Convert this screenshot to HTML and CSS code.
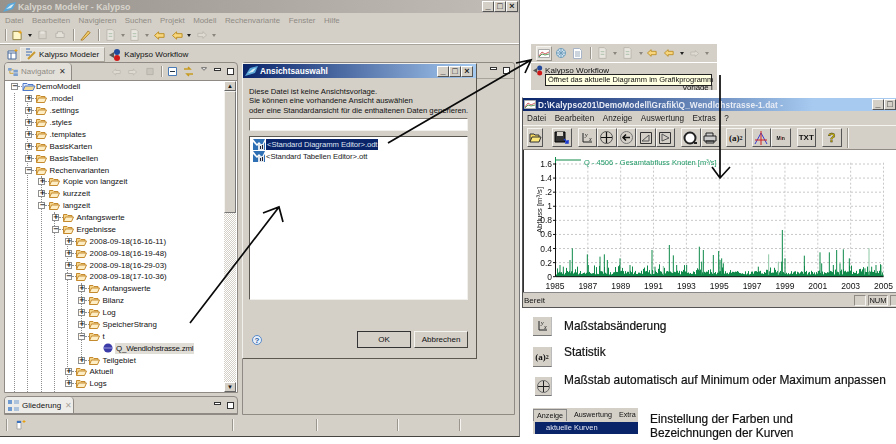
FILE: index.html
```html
<!DOCTYPE html>
<html lang="de">
<head>
<meta charset="utf-8">
<title>Kalypso</title>
<link rel="stylesheet" href="styles.css">
</head>
<body>
<svg class="defs" width="0" height="0">
  <defs>
    <symbol id="folder" viewBox="0 0 11 9"><path d="M.5 8.500V1.500H4l1 1h4v1.500" fill="#f6d58c" stroke="#c58a2e"/><path d="M.5 8.500 2.500 4h8l-2 4.500z" fill="#fdeec6" stroke="#c58a2e"/></symbol>
    <symbol id="folderb" viewBox="0 0 14 9"><path d="M1 8.500V1.500H5l1 1h5v1.500" fill="#dfe9fb" stroke="#4f79c9"/><path d="M1 8.500 3 4h10l-2 4.500z" fill="#f3da94" stroke="#4f79c9"/></symbol>
    <symbol id="chartdoc" viewBox="0 0 12 11"><rect width="12" height="11" fill="#2f6fb3"/><path d="M0 0 4 5l2-2 3 3 3-6v3L9 8 6 5 4 7 0 3z" fill="#fff"/><rect x="5" y="5" width="6" height="6" fill="#dfe6ee"/><path d="M7 10V7h1v3zm2 0V6h1v4z" fill="#223"/></symbol>
    <symbol id="backarrow" viewBox="0 0 12 9"><path d="M.5 4.500 5 .5v2h6v4H5v2z" fill="#f7d67e" stroke="#b98a1e"/></symbol>
    <symbol id="fwdarrow" viewBox="0 0 12 9"><path d="M11.500 4.500 7 .5v2H1v4h6v2z" fill="#dedad2" stroke="#b9b5ad"/></symbol>
    <symbol id="pagearrow" viewBox="0 0 10 13"><path d="M1 .5h6l2 2v10H1z" fill="#e8e5df" stroke="#b9b5ad"/><path d="M3 5h4M3 8h4" stroke="#a8c0a8"/></symbol>
  </defs>
</svg>

<section class="win main-win">
  <header class="main-title">
    <svg width="13" height="10" viewBox="0 0 13 10"><path d="M0 10 5 2l8-2-3 7z" fill="#5aa7d8"/><path d="M3 7 8 3l3-1-3 4z" fill="#d8ecf6"/></svg>
    <span>Kalypso Modeler - Kalypso</span>
    <div class="capbtns main-caps"><i>_</i><i>□</i><i>×</i></div>
  </header>
  <nav class="main-menu">
    <span>Datei</span><span>Bearbeiten</span><span>Navigieren</span><span>Suchen</span><span>Projekt</span><span>Modell</span><span>Rechenvariante</span><span>Fenster</span><span>Hilfe</span>
  </nav>
  <div class="main-tools">
    <b class="grip"></b>
    <svg class="m5" width="11" height="11" viewBox="0 0 12 11"><path d="M1 1h7l2 2v7H1z" fill="#fff6c8" stroke="#8a7a3a"/><path d="M9 0v4M7 2h4" stroke="#e8a010"/></svg>
    <em class="drop m5"></em>
    <svg class="m6" width="9" height="10" viewBox="0 0 11 11"><path d="M1 1h9v9H1z" fill="#d6d2ca" stroke="#b5b1a9"/><path d="M3 1h5v3H3z" fill="#e8e5df"/></svg>
    <svg class="m8" width="10" height="10" viewBox="0 0 12 10"><path d="M3 3V1h6v2h2v5H1V3z" fill="#e3e0d8" stroke="#b5b1a9"/></svg>
    <b class="grip m8"></b>
    <svg class="m5" width="11" height="11" viewBox="0 0 12 12"><path d="M1 11 9 1l2 2-8 8z" fill="#f4cf6e" stroke="#a87a22"/></svg>
    <b class="grip m7"></b>
    <svg class="m6" width="9" height="12"><use href="#pagearrow"/></svg><em class="drop pale m6"></em>
    <svg class="m5" width="9" height="12"><use href="#pagearrow"/></svg><em class="drop pale m6"></em>
    <svg class="m5" width="11" height="9"><use href="#backarrow"/></svg>
    <svg class="m7" width="11" height="9"><use href="#backarrow"/></svg><em class="drop m4"></em>
    <svg class="m6" width="10" height="8"><use href="#fwdarrow"/></svg><em class="drop pale m5"></em>
  </div>
  <div class="persp">
    <svg class="persp-new" width="11" height="11" viewBox="0 0 11 11"><path d="M1 2h8v8H1z" fill="#fff" stroke="#4a6a9a"/><path d="M1 4h8M4 4v6" stroke="#4a6a9a"/><path d="M9 0v3M7.500 1.500h3" stroke="#e8a010"/></svg>
    <div class="persp-tab active">
      <svg width="11" height="12" viewBox="0 0 11 12"><path d="M1 1h4M1 4h6M1 7h4" stroke="#3a6ab0"/><path d="M3 11 10 4" stroke="#c89a30" stroke-width="2"/></svg>
      <span>Kalypso Modeler</span>
    </div>
    <div class="persp-tab">
      <svg width="12" height="13" viewBox="0 0 12 13"><circle cx="8" cy="4" r="3" fill="#234a9a"/><circle cx="8" cy="10" r="3" fill="#d01818"/><path d="M0 7 5 4v6z" fill="#555"/></svg>
      <span>Kalypso Workflow</span>
    </div>
  </div>

  <div class="workbench">
    <div class="left-col">
      <section class="view navigator">
        <div class="view-head">
          <div class="view-tab">
            <svg width="10" height="8" viewBox="0 0 11 9"><path d="M0 0h4v3H0zM6 2h5v3H6zM6 6h5v3H6z" fill="#7ba0cf"/><path d="M2 3v3h4M4 2h2" stroke="#c9a030" fill="none"/></svg>
            <span class="dim">Navigator</span><span class="tab-x">✕</span>
          </div>
          <div class="view-tools">
            <svg width="9" height="8" viewBox="0 0 12 9"><path d="M.5 4.500 5 .5v2h6v4H5v2z" fill="#dedad2" stroke="#b9b5ad"/></svg>
            <svg class="m7" width="9" height="8"><use href="#fwdarrow"/></svg>
            <svg class="m9" width="8" height="9" viewBox="0 0 9 9"><path d="M1 1h7v7H1z" fill="#c9c5bd" stroke="#b5b1a9"/></svg>
            <b class="grip short m7"></b>
            <svg class="m5" width="9" height="9" viewBox="0 0 9 9"><path d="M.5.500h8v8h-8z" fill="#fff" stroke="#4a7ab5"/><path d="M2 4.500h5" stroke="#234"/></svg>
            <svg class="m6" width="11" height="11" viewBox="0 0 11 11"><path d="M1 3h6L5 1M10 8H4l2 2" fill="none" stroke="#c89a20" stroke-width="1.500"/></svg>
            <svg class="m7 up" width="6" height="4" viewBox="0 0 7 4"><path d="M.5.500h6L3.500 3.500z" fill="#fff" stroke="#555"/></svg>
            <span class="mini min m7"></span><span class="mini max m6"></span>
          </div>
        </div>
        <div class="tree-wrap">
          <div class="tree">
            <i class="guide g1"></i><i class="guide g2"></i><i class="guide g3"></i><i class="guide g4"></i><i class="guide g5"></i><i class="guide g6"></i>
            <div class="row l0"><b class="x">−</b><svg width="14" height="9"><use href="#folderb"/></svg><span>DemoModell</span></div>
            <div class="row l1"><b class="x">+</b><svg width="11" height="9"><use href="#folder"/></svg><span>.model</span></div>
            <div class="row l1"><b class="x">+</b><svg width="11" height="9"><use href="#folder"/></svg><span>.settings</span></div>
            <div class="row l1"><b class="x">+</b><svg width="11" height="9"><use href="#folder"/></svg><span>.styles</span></div>
            <div class="row l1"><b class="x">+</b><svg width="11" height="9"><use href="#folder"/></svg><span>.templates</span></div>
            <div class="row l1"><b class="x">+</b><svg width="11" height="9"><use href="#folder"/></svg><span>BasisKarten</span></div>
            <div class="row l1"><b class="x">+</b><svg width="11" height="9"><use href="#folder"/></svg><span>BasisTabellen</span></div>
            <div class="row l1"><b class="x">−</b><svg width="11" height="9"><use href="#folder"/></svg><span>Rechenvarianten</span></div>
            <div class="row l2"><b class="x">+</b><svg width="11" height="9"><use href="#folder"/></svg><span>Kopie von langzeit</span></div>
            <div class="row l2"><b class="x">+</b><svg width="11" height="9"><use href="#folder"/></svg><span>kurzzeit</span></div>
            <div class="row l2"><b class="x">−</b><svg width="11" height="9"><use href="#folder"/></svg><span>langzeit</span></div>
            <div class="row l3"><b class="x">+</b><svg width="11" height="9"><use href="#folder"/></svg><span>Anfangswerte</span></div>
            <div class="row l3"><b class="x">−</b><svg width="11" height="9"><use href="#folder"/></svg><span>Ergebnisse</span></div>
            <div class="row l4"><b class="x">+</b><svg width="11" height="9"><use href="#folder"/></svg><span>2008-09-18(16-16-11)</span></div>
            <div class="row l4"><b class="x">+</b><svg width="11" height="9"><use href="#folder"/></svg><span>2008-09-18(16-19-48)</span></div>
            <div class="row l4"><b class="x">+</b><svg width="11" height="9"><use href="#folder"/></svg><span>2008-09-18(16-29-03)</span></div>
            <div class="row l4"><b class="x">−</b><svg width="11" height="9"><use href="#folder"/></svg><span>2008-09-18(17-10-36)</span></div>
            <div class="row l5"><b class="x">+</b><svg width="11" height="9"><use href="#folder"/></svg><span>Anfangswerte</span></div>
            <div class="row l5"><b class="x">+</b><svg width="11" height="9"><use href="#folder"/></svg><span>Bilanz</span></div>
            <div class="row l5"><b class="x">+</b><svg width="11" height="9"><use href="#folder"/></svg><span>Log</span></div>
            <div class="row l5"><b class="x">+</b><svg width="11" height="9"><use href="#folder"/></svg><span>SpeicherStrang</span></div>
            <div class="row l5"><b class="x">−</b><svg width="11" height="9"><use href="#folder"/></svg><span>t</span></div>
            <div class="row l6"><svg width="10" height="10" viewBox="0 0 10 10"><circle cx="5" cy="5" r="4.500" fill="#3c3ca8"/><path d="M0 5h10" stroke="#9a9ae0"/></svg><span class="sel-file">Q_Wendlohstrasse.zml</span></div>
            <div class="row l5"><b class="x">+</b><svg width="11" height="9"><use href="#folder"/></svg><span>Teilgebiet</span></div>
            <div class="row l4"><b class="x">+</b><svg width="11" height="9"><use href="#folder"/></svg><span>Aktuell</span></div>
            <div class="row l4"><b class="x">+</b><svg width="11" height="9"><use href="#folder"/></svg><span>Logs</span></div>
          </div>
          <div class="scroll">
            <span class="sbtn">▲</span><span class="thumb"></span><span class="track"></span><span class="sbtn">▼</span>
          </div>
        </div>
      </section>
      <section class="view outline">
        <div class="view-head low">
          <div class="view-tab out">
            <svg width="11" height="11" viewBox="0 0 11 11"><path d="M0 0h4v4H0zM0 7h4v4H0z" fill="#6f9bd0"/><path d="M6 1h5M6 3h5M6 8h5M6 10h5" stroke="#6f9bd0"/></svg>
            <span>Gliederung</span><span class="tab-x pale">✕</span>
          </div>
          <div class="view-tools"><span class="mini min"></span><span class="mini max m6"></span></div>
        </div>
      </section>
    </div>
    <div class="right-col">
      <div class="editor-head"><span class="mini min"></span><span class="mini max m6"></span></div>
    </div>
  </div>
  <footer class="main-status">
    <b class="grip fast"></b>
    <svg class="new-ico" width="10" height="10" viewBox="0 0 10 10"><path d="M1 1h4v8H1z" fill="#fff" stroke="#aaa"/><path d="M1 1h4v2H1z" fill="#3a70c0"/><path d="M8 0v3M6.500 1.500h3" stroke="#e8a010"/></svg>
    <b class="grip s1"></b><b class="grip s2"></b><b class="grip s3"></b><b class="grip s4"></b>
  </footer>
</section>

<section class="win dialog">
  <header class="dlg-title">
    <svg width="13" height="10" viewBox="0 0 13 10"><path d="M0 10 5 2l8-2-3 7z" fill="#5aa7d8"/><path d="M3 7 8 3l3-1-3 4z" fill="#d8ecf6"/></svg>
    <span>Ansichtsauswahl</span>
    <div class="capbtns"><i>_</i><i>□</i><i>×</i></div>
  </header>
  <div class="dlg-body">
    <p class="dlg-text">Diese Datei ist keine Ansichtsvorlage.<br>Sie können eine vorhandene Ansicht auswählen<br>oder eine Standardansicht für die enthaltenen Daten generieren.</p>
    <div class="dlg-input"></div>
    <div class="dlg-list">
      <div class="li"><svg width="12" height="11"><use href="#chartdoc"/></svg><span class="sel">&lt;Standard Diagramm Editor&gt;.odt</span></div>
      <div class="li"><svg width="12" height="11"><use href="#chartdoc"/></svg><span>&lt;Standard Tabellen Editor&gt;.ott</span></div>
    </div>
    <div class="dlg-foot">
      <svg width="10" height="10" viewBox="0 0 10 10"><circle cx="5" cy="5" r="4.500" fill="#e8f0fa" stroke="#5a8ac8"/><text x="5" y="8" class="help">?</text></svg>
      <button class="btn default">OK</button><button class="btn">Abbrechen</button>
    </div>
  </div>
</section>

<section class="snippet">
  <div class="snip-tools">
    <span class="snip-on"><svg width="12" height="9" viewBox="0 0 12 9"><path d="M.5.500h11v8H.5z" fill="#fff" stroke="#aaa"/><path d="M1 7 4 3l3 2 4-2" fill="none" stroke="#d06060"/><path d="M1 8 4 5l3 1 4-1" fill="none" stroke="#60a060"/></svg></span>
    <svg class="m4" width="10" height="10" viewBox="0 0 11 11"><circle cx="5.500" cy="5.500" r="5" fill="#cfe0ee" stroke="#6a9ab8"/><path d="M1 5.500h9M5.500 1v9M2.500 2.500l6 6M8.500 2.500l-6 6" stroke="#6a9ab8"/></svg>
    <svg class="m7" width="9" height="11" viewBox="0 0 9 11"><path d="M.5.500h6l2 2v8H.5z" fill="#fff" stroke="#a8b4c8"/><path d="M2 4h5M2 6h5M2 8h5" stroke="#9ab"/></svg>
    <b class="grip m8"></b>
    <svg class="m6" width="9" height="12"><use href="#pagearrow"/></svg><em class="drop pale m6"></em>
    <svg class="m6" width="9" height="12"><use href="#pagearrow"/></svg><em class="drop pale m7"></em>
    <svg class="m4" width="10" height="8"><use href="#backarrow"/></svg>
    <svg class="m7" width="10" height="8"><use href="#backarrow"/></svg><em class="drop m6"></em>
    <svg class="m6" width="9" height="7"><use href="#fwdarrow"/></svg><em class="drop pale m6"></em>
  </div>
  <div class="snip-flow">
    <svg width="10" height="12" viewBox="0 0 12 13"><circle cx="8" cy="4" r="3" fill="#234a9a"/><circle cx="8" cy="10" r="3" fill="#d01818"/><path d="M0 7 5 4v6z" fill="#555"/></svg>
    <span>Kalypso Workflow</span>
  </div>
  <div class="snip-low"><span>Vorlage I</span></div>
  <div class="tooltip">Öffnet das aktuelle Diagramm im Grafikprogramm</div>
</section>

<section class="win chart-win">
  <header class="chart-title">
    <svg width="12" height="9" viewBox="0 0 12 9"><path d="M.5.500h11v8H.5z" fill="#fff" stroke="#aaa"/><path d="M1 7 4 3l3 2 4-2" fill="none" stroke="#d06060"/><path d="M1 8 4 5l3 1 4-1" fill="none" stroke="#60a060"/></svg>
    <span>D:\Kalypso201\DemoModell\Grafik\Q_Wendlohstrasse-1.dat -</span>
    <div class="capbtns"><i>_</i><i>□</i></div>
  </header>
  <nav class="chart-menu"><span>Datei</span><span>Bearbeiten</span><span>Anzeige</span><span>Auswertung</span><span>Extras</span><span>?</span></nav>
  <div class="chart-tools">
    <span class="tb first"><svg width="13" height="11" viewBox="0 0 13 11"><path d="M1 10V2h4l1 1h4v2" fill="#f4d860" stroke="#333"/><path d="M1 10 3 5h9l-2 5z" fill="#ffe97a" stroke="#333"/></svg></span>
    <span class="tb g1"><svg width="15" height="14" viewBox="0 0 15 14"><path d="M1 1h10v10H1z" fill="#333" stroke="#000"/><path d="M3 1h6v4H3z" fill="#d8d4cc"/><path d="M10 8l4 4M14 9v3h-3" stroke="#1a3ad0" stroke-width="1.500" fill="none"/></svg></span>
    <span class="tb g2"><svg width="12" height="12" viewBox="0 0 12 12"><path d="M2 1v9h9" fill="none" stroke="#222"/><text x="4" y="5" class="tiny">y</text><text x="8" y="9" class="tiny">x</text></svg></span>
    <span class="tb"><svg width="13" height="13" viewBox="0 0 13 13"><circle cx="6.500" cy="6.500" r="6" fill="none" stroke="#555"/><path d="M6.500 1v11M1 6.500h11" stroke="#111" stroke-width="1.200"/></svg></span>
    <span class="tb"><svg width="13" height="13" viewBox="0 0 13 13"><circle cx="6.500" cy="6.500" r="6" fill="none" stroke="#777"/><path d="M10 6.500H3M6 3.500l-3 3 3 3" fill="none" stroke="#111" stroke-width="1.500"/></svg></span>
    <span class="tb"><svg width="12" height="12" viewBox="0 0 12 12"><path d="M.5.500h11v11H.5z" fill="none" stroke="#333"/><path d="M2 9 9 3v6z" fill="none" stroke="#555"/></svg></span>
    <span class="tb"><svg width="12" height="12" viewBox="0 0 12 12"><path d="M.5.500h11v11H.5z" fill="none" stroke="#333"/><path d="M3 2 10 6 3 9z" fill="none" stroke="#555"/></svg></span>
    <span class="tb g2"><svg width="15" height="14" viewBox="0 0 15 14"><circle cx="7" cy="7" r="5.500" fill="#fff" stroke="#222" stroke-width="2"/><path d="M11 12h3" stroke="#222" stroke-width="2"/></svg></span>
    <span class="tb"><svg width="14" height="12" viewBox="0 0 14 12"><path d="M3 4V1h7v3M1 4h12v5H1zM3 9h8v2H3z" fill="#ccc" stroke="#222"/></svg></span>
    <span class="tb g2 sym">(a)<sup>2</sup></span>
    <span class="tb g2"><svg width="14" height="14" viewBox="0 0 14 14"><path d="M1 13 7 2l6 11" fill="none" stroke="#3a3ad0"/><path d="M7 0v14M1 9h12" stroke="#d02020"/></svg></span>
    <span class="tb sym small">M<i>i</i>n</span>
    <span class="tb g2 sym txt">TXT</span>
    <span class="tb g2 sym q">?</span>
    <b class="grip tall"></b>
  </div>
  <div class="chart-area">
    <svg id="chart" class="chart-svg" width="372" height="141" viewBox="0 0 372 141"></svg>
  </div>
  <footer class="chart-status">
    <span>Bereit</span>
    <div class="cells"><i></i><i>NUM</i><i></i></div>
  </footer>
</section>

<section class="legend">
  <div class="lg-row r1"><span class="key"><svg width="12" height="12" viewBox="0 0 12 12"><path d="M3 1v9h8" fill="none" stroke="#222"/><text x="5" y="5" class="tiny">y</text><text x="8" y="9" class="tiny">x</text></svg></span><span class="lg-text">Maßstabsänderung</span></div>
  <div class="lg-row r2"><span class="key sym">(a)<sup>2</sup></span><span class="lg-text">Statistik</span></div>
  <div class="lg-row r3"><span class="key"><svg width="13" height="13" viewBox="0 0 13 13"><circle cx="6.500" cy="6.500" r="6" fill="none" stroke="#666"/><path d="M6.500 1v11M1 6.500h11" stroke="#222"/></svg></span><span class="lg-text">Maßstab automatisch auf Minimum oder Maximum anpassen</span></div>
  <div class="lg-last">
    <div class="mini-menu">
      <div class="mm-bar"><span class="on">Anzeige</span><span>Auswertung</span><span>Extra</span></div>
      <div class="mm-item">aktuelle Kurven</div>
    </div>
    <div class="lg-text two">Einstellung der Farben und<br>Bezeichnungen der Kurven</div>
  </div>
</section>

<svg class="arrows" width="896" height="444" viewBox="0 0 896 444">
  <path d="M190 323 279 207M263 213 279 207 283 222" />
  <path d="M388 143 531 60M516 63 531 60 525 73" />
  <path d="M720 75V178M712 167 720 178 730 167" />
</svg>
<script src="chart.js"></script>
</body>
</html>
```

FILE: styles.css
```css
* { box-sizing: border-box; }
html, body { margin: 0; padding: 0; }
body {
  width: 896px; height: 444px; overflow: hidden; position: relative;
  background: #fff; color: #111;
  font-family: "Liberation Sans", Arial, sans-serif; font-size: 8px;
  filter: blur(.3px);
}
.defs { position: absolute; }
svg { display: block; flex: none; }
em, i, b { font-style: normal; font-weight: normal; }
.m4 { margin-left: 4px; } .m5 { margin-left: 5px; } .m6 { margin-left: 6px; } .m7 { margin-left: 7px; } .m8 { margin-left: 8px; } .m9 { margin-left: 9px; }
.win { position: absolute; background: #d4d0c8; }

.main-win { left: 0; top: 0; width: 520px; height: 437px; display: flex; flex-direction: column; border-bottom: 1px solid #45443f; border-right: 1px solid #777; }
.main-title { flex: none; height: 13px; display: flex; align-items: center; gap: 2px; padding: 0 1px 0 3px; background: linear-gradient(90deg, #97938c, #c2beb7); color: #d8d4cc; font-size: 8.800px; font-weight: bold; }
.capbtns { margin-left: auto; display: flex; }
.capbtns i { width: 12px; height: 11px; background: #d4d0c8; color: #222; border: 1px solid; border-color: #fff #555 #555 #fff; font-size: 9px; line-height: 8px; text-align: center; font-weight: bold; }
.main-menu { flex: none; height: 14px; display: flex; align-items: center; padding: 0 0 0 5px; gap: 8.500px; color: #8f8b84; font-size: 7.900px; }
.main-tools { flex: none; height: 17px; display: flex; align-items: center; padding-left: 5px; border-bottom: 1px solid #fff; box-shadow: 0 1px 0 #a8a49c; }
.grip { display: block; flex: none; width: 2px; height: 12px; background: #f6f4f0; border-left: 1px solid #9a968e; }
.grip.short { height: 11px; }
.drop { flex: none; width: 0; height: 0; border: 2.500px solid transparent; border-top: 3px solid #222; border-bottom: 0; }
.drop.pale { border-top-color: #8a867e; }

.persp { flex: none; height: 18px; display: flex; align-items: center; padding: 2px 0 0 7px; }
.persp-new { margin-right: 2px; }
.persp-tab { height: 15px; display: flex; align-items: center; gap: 3px; padding: 0 5px 0 4px; font-size: 8.100px; white-space: nowrap; }
.persp-tab.active { background: #e4e1db; border: 1px solid #f2f0ec; border-right-color: #aaa69e; border-bottom-color: #aaa69e; }

.workbench { flex: none; height: 353px; display: flex; padding: 0 4px 0 4px; }
.left-col { flex: none; width: 234px; display: flex; flex-direction: column; gap: 3px; }
.right-col { flex: 1; margin-left: 4px; border: 1px solid #8f8b84; border-radius: 3px 3px 0 0; }
.editor-head { height: 16px; display: flex; align-items: center; justify-content: flex-end; padding-right: 4px; border-bottom: 1px solid #a8a49c; }
.view { border: 1px solid #8f8b84; border-radius: 4px 4px 0 0; display: flex; flex-direction: column; }
.navigator { flex: none; height: 331px; }
.outline { flex: none; height: 19px; }
.view-head { flex: none; height: 18px; display: flex; align-items: stretch; justify-content: space-between; border-bottom: 1px solid #8f8b84; }
.view-head.low { height: 17px; }
.view-tab { width: 67px; display: flex; align-items: center; gap: 3px; padding-left: 3px; background: #e3e0da; border-right: 1px solid #8f8b84; border-radius: 3px 4px 0 0; white-space: nowrap; }
.view-tab.out { width: 69px; background: #eeece8; font-size: 8px; }
.dim { color: #8f8b84; font-size: 8px; }
.tab-x { margin-left: 1px; font-size: 7.500px; color: #333; }
.tab-x.pale { color: #a8a49c; }
.view-tools { display: flex; align-items: center; padding-right: 3px; }
.up { margin-top: -6px; }
.mini { display: block; flex: none; width: 7px; height: 7px; background: #fff; border: 1px solid #333; }
.mini.min { height: 3px; margin-bottom: 4px; }

.tree-wrap { flex: 1; display: flex; background: #fff; min-height: 0; padding-right: 1px; }
.tree { position: relative; flex: 1; }
.guide { position: absolute; width: 0; border-left: 1px dotted #8f8f8f; bottom: 0; }
.guide.g1 { left: 9px; top: 12px; }
.guide.g2 { left: 22px; top: 18px; }
.guide.g3 { left: 36px; top: 95px; }
.guide.g4 { left: 49px; top: 131px; }
.guide.g5 { left: 62px; top: 155px; bottom: 7px; }
.guide.g6 { left: 76px; top: 202px; bottom: 31px; }
.row { position: relative; height: 11.880px; display: flex; align-items: center; font-size: 7.900px; white-space: nowrap; }
.row svg { margin-right: 2.500px; }
.x { position: relative; flex: none; width: 7px; height: 7px; margin-right: 4px; border: 1px solid #8f8f8f; background: #fff; color: #000; font: bold 7px/4px "DejaVu Sans", sans-serif; text-align: center; }
.x::after { content: ""; position: absolute; left: 6px; top: 2px; width: 4px; border-top: 1px dotted #8f8f8f; }
.l0 { padding-left: 6px; } .l1 { padding-left: 20px; } .l2 { padding-left: 33.400px; } .l3 { padding-left: 47px; } .l4 { padding-left: 60px; } .l5 { padding-left: 73px; } .l6 { padding-left: 98px; }
.l0 svg { margin-right: 0; }
.sel-file { background: #e1ded8; padding: 0 1px; line-height: 11px; letter-spacing: -.2px; }
.row.l6 svg { margin-right: 2px; }
.scroll { flex: none; width: 12px; display: flex; flex-direction: column; }
.sbtn { flex: none; height: 10px; background: #d4d0c8; border: 1px solid; border-color: #fff #666 #666 #fff; font-size: 6px; line-height: 8px; text-align: center; color: #111; }
.thumb { flex: none; height: 122px; background: #d4d0c8; border: 1px solid; border-color: #f6f4f0 #777 #777 #f6f4f0; }
.track { flex: 1; background: repeating-conic-gradient(#fff 0 25%, #d4d0c8 0 50%) 0 0 / 2px 2px; }

.main-status { flex: 1; position: relative; }
.grip.fast, .grip.s1, .grip.s2, .grip.s3, .grip.s4 { position: absolute; top: 4px; }
.grip.fast { left: 6px; }
.new-ico { position: absolute; left: 16px; top: 5px; }
.grip.s1 { left: 232px; } .grip.s2 { left: 316px; } .grip.s3 { left: 397px; } .grip.s4 { left: 459px; }

.dialog { left: 242px; top: 63px; width: 235px; height: 296px; border: 1px solid; border-color: #f2f0ec #5a5850 #5a5850 #f2f0ec; display: flex; flex-direction: column; }
.dlg-title { flex: none; height: 14px; display: flex; align-items: center; gap: 2px; padding: 0 3px 0 2px; background: linear-gradient(90deg, #0a246a, #a6caf0); color: #fff; font-size: 8.300px; font-weight: bold; }
.dlg-body { flex: 1; display: flex; flex-direction: column; padding: 9px 8px 10px 6px; min-height: 0; }
.dlg-text { margin: 0; font-size: 7.700px; line-height: 9.300px; white-space: nowrap; }
.dlg-input { flex: none; height: 13px; margin-top: 3px; background: #fff; border: 1px solid; border-color: #7a766e #f2f0ec #f2f0ec #7a766e; }
.dlg-list { flex: 1; margin-top: 5px; background: #fff; border: 1px solid; border-color: #5a5850 #f2f0ec #f2f0ec #5a5850; padding: 2px 3px; }
.li { display: flex; align-items: center; height: 11.500px; gap: 1px; font-size: 7.700px; letter-spacing: -.08px; white-space: nowrap; color: #222; }
.li .sel { background: #0a246a; color: #dfe3ee; padding: 1px; }
.dlg-foot { flex: none; display: flex; align-items: center; height: 17px; margin-top: 31px; padding-left: 3px; }
.btn { width: 54px; height: 17px; margin: 0; padding: 0; font: 8px "Liberation Sans", Arial, sans-serif; color: #111; background: #d4d0c8; border: 1px solid; border-color: #f6f4f0 #45443f #45443f #f6f4f0; }
.btn.default { margin-left: auto; margin-right: 3px; outline: 1px solid #333; outline-offset: -1px; }

.help { font: bold 8px "Liberation Sans", sans-serif; text-anchor: middle; fill: #2a5aa0; }
.tiny { font: italic 6px "Liberation Serif", serif; fill: #111; }

.snippet { position: absolute; left: 531px; top: 44px; width: 186px; height: 46px; background: #d4d0c8; overflow: hidden; }
.snip-tools { height: 19px; display: flex; align-items: center; padding-left: 5px; border-bottom: 1px solid #fff; }
.snip-on { flex: none; width: 16px; height: 15px; display: flex; align-items: center; justify-content: center; background: #e6e3dd; border: 1px solid; border-color: #f6f4f0 #9a968e #9a968e #f6f4f0; }
.snip-flow { display: flex; align-items: center; gap: 2px; padding-left: 2px; height: 10px; margin-top: 2px; font-size: 8.100px; white-space: nowrap; }
.snip-low { display: flex; justify-content: flex-end; padding-right: 4px; margin-top: 10px; font-size: 7.800px; height: 5px; line-height: 6px; overflow: hidden; }
.tooltip { position: absolute; left: 14px; top: 30px; height: 12px; width: 167px; background: #ffffe1; border: 1px solid #222; font-size: 7.500px; line-height: 10px; padding-left: 2px; white-space: nowrap; color: #111; }

.chart-win { left: 522px; top: 97px; width: 374px; height: 211px; display: flex; flex-direction: column; border-left: 1px solid #555; border-bottom: 1px solid #555; border-top: 1px solid #fff; }
.chart-title { flex: none; height: 13px; display: flex; align-items: center; gap: 2px; padding-left: 1px; background: linear-gradient(90deg, #0a246a 0, #a6caf0 290px); color: #e8ecf4; font-size: 8.300px; font-weight: bold; letter-spacing: .1px; white-space: nowrap; }
.chart-menu { flex: none; height: 14px; display: flex; align-items: center; gap: 8.500px; padding-left: 4px; font-size: 8.200px; color: #222; }
.chart-tools { flex: none; height: 25px; display: flex; align-items: center; padding-left: 4px; border-top: 1px solid #f6f4f0; border-bottom: 1px solid #8f8b84; }
.tb { flex: none; width: 19.500px; height: 19px; display: flex; align-items: center; justify-content: center; background: #d4d0c8; border: 1px solid; border-color: #f6f4f0 #555 #555 #f6f4f0; }
.tb.first { width: 16px; }
.tb.g1 { margin-left: 9px; } .tb.g2 { margin-left: 6px; }
.sym { font: bold 9px "Liberation Serif", serif; color: #111; }
.sym sup { font-size: 6px; line-height: 0; vertical-align: 3px; }
.sym.small { font: bold 5px "Liberation Sans", sans-serif; }
.sym.small i { color: #c01010; }
.sym.txt { font: bold 8px "Liberation Sans", sans-serif; }
.sym.q { font: bold 13px "Liberation Sans", sans-serif; color: #c8b000; -webkit-text-stroke: .3px #222; }
.grip.tall { height: 20px; margin-left: 5px; }
.chart-area { flex: none; height: 142px; background: #fff; border-left: 1px solid #333; }
.chart-svg text { font-family: "Liberation Sans", Arial, sans-serif; font-size: 8.500px; fill: #111; }
.chart-svg .lbl { font-size: 7.500px; fill: #1f9a66; }
.chart-svg .ylab { font-size: 7.600px; }
.chart-status { flex: 1; display: flex; align-items: center; justify-content: space-between; padding-left: 1px; font-size: 8px; border-top: 1px solid #888; overflow: hidden; }
.cells { display: flex; gap: 2px; margin-right: -6px; }
.cells i { width: 12px; height: 11px; border: 1px solid; border-color: #8f8b84 #f6f4f0 #f6f4f0 #8f8b84; font-size: 7.500px; line-height: 9px; text-align: center; }
.cells i:nth-child(2) { width: 20px; }

.legend { position: absolute; left: 0; top: 0; width: 896px; height: 444px; pointer-events: none; }
.lg-row { position: absolute; left: 533px; display: flex; align-items: flex-start; }
.r1 { top: 317px; } .r2 { top: 347px; } .r3 { top: 377px; }
.key { flex: none; width: 19px; height: 19px; display: flex; align-items: center; justify-content: center; background: #d4d0c8; border-bottom: 1px solid #777; border-right: 1px solid #bbb; }
.lg-text { font-size: 11.900px; line-height: 13.700px; color: #111; -webkit-text-stroke: .2px #111; white-space: nowrap; }
.r1 .lg-text { margin: 3px 0 0 12px; } .r2 .lg-text { margin: -1px 0 0 12px; } .r3 .lg-text { margin: -3px 0 0 12px; }
.r2 .key { height: 20px; }
.r3 .key { width: 17px; margin-left: 2px; }
.lg-last { position: absolute; left: 533px; top: 408px; display: flex; gap: 12px; }
.mini-menu { width: 105px; height: 26px; background: #d4d0c8; overflow: hidden; }
.mm-bar { display: flex; height: 13px; align-items: center; font-size: 7.200px; gap: 7px; white-space: nowrap; }
.mm-bar .on { border: 1px solid #888; border-bottom: 0; padding: 1px 3px; }
.mm-item { margin: 1px 0 0 2px; height: 12px; background: #0a246a; color: #e4e8f2; font-size: 7.500px; line-height: 12px; padding-left: 11px; }
.lg-text.two { margin-top: 5px; }

.arrows { position: absolute; left: 0; top: 0; pointer-events: none; }
.arrows path { fill: none; stroke: #0a0a0a; stroke-width: 1.700; }
```

FILE: chart.js
```js
(function () {
  var svg = document.getElementById('chart');
  var NS = 'http://www.w3.org/2000/svg';
  var OX = 524, OY = 150;
  var x0 = 555 - OX, x1 = 883.5 - OX, y0 = 276.7 - OY, yTop = 164 - OY;
  function el(n, a, t) {
    var e = document.createElementNS(NS, n);
    for (var k in a) e.setAttribute(k, a[k]);
    if (t) e.textContent = t;
    svg.appendChild(e);
    return e;
  }
  var i, x, y;
  for (i = 1; i <= 8; i++) {
    y = y0 - i * (y0 - yTop) / 8;
    el('line', { x1: x0, x2: x1, y1: y, y2: y, stroke: '#c8c8c8', 'stroke-dasharray': '2 2' });
  }
  for (i = 1; i <= 10; i++) {
    x = x0 + i * (x1 - x0) / 10;
    el('line', { x1: x, x2: x, y1: y0, y2: 11, stroke: '#c8c8c8', 'stroke-dasharray': '2 2' });
  }
  var seed = 7;
  function rnd() { seed = (seed * 16807) % 2147483647; return seed / 2147483647; }
  var d = '';
  for (x = Math.floor(x0) + 1.5; x < x1; x += 1) {
    var h = 2 + rnd() * 4;
    if (rnd() < 0.3) h += rnd() * 7;
    d += 'M' + x + ' ' + y0 + 'V' + (y0 - h);
  }
  var peaks = [[120,345],[130,350],[150,330],[157,295],[202,313],[205,345],[240,320],[253,313],[262,330],[300,325],[330,345],[396,300],[405,350],[448,285],[460,316],[470,345],[500,345],[538,290],[550,300],[545,335],[580,315],[596,303],[600,330],[605,325],[610,340],[787,240],[795,325],[785,335],[715,350],[853,317],[900,307],[905,340],[928,307],[940,345],[950,300],[970,298],[988,325],[960,340],[1068,345],[1055,350],[1035,355]];
  peaks.forEach(function (p) {
    d += 'M' + (520 + p[0] / 3 - OX) + ' ' + y0 + 'V' + (150 + p[1] / 3 - OY);
  });
  el('path', { d: d, stroke: '#0f8a4a', fill: 'none' });
  var pale = [[430,348],[746,313],[775,335],[1047,295],[1085,345]];
  var dp = '';
  pale.forEach(function (p) {
    dp += 'M' + (520 + p[0] / 3 - OX) + ' ' + y0 + 'V' + (150 + p[1] / 3 - OY);
  });
  el('path', { d: dp, stroke: '#8ec8a6', fill: 'none' });
  el('path', { d: 'M' + x0 + ' ' + (y0 - 1) + 'H' + x1, stroke: '#0f8a4a', fill: 'none', 'stroke-width': 2 });

  el('path', { d: 'M' + (x0 + .5) + ' 7V' + y0 + 'H' + x1, stroke: '#111', fill: 'none' });
  el('path', { d: 'M' + (x0 + .5) + ' 10H' + (x0 + 26), stroke: '#0f8a4a', fill: 'none' });
  el('path', { d: 'M' + (x0 + .5) + ' 7V13', stroke: '#0f8a4a', fill: 'none' });
  el('text', { x: x0 + 29, y: 15, class: 'lbl' }, 'Q - 4506 - Gesamtabfluss Knoten [m³/s]');

  var yl = ['0', '0.2', '0.4', '0.6', '0.8', '1', '.2', '1.4', '1.6'];
  yl.forEach(function (t, n) {
    y = y0 - n * (y0 - yTop) / 8;
    el('text', { x: x0 - 3, y: y + 3, 'text-anchor': 'end' }, t);
    el('line', { x1: x0 - 2, x2: x0, y1: y, y2: y, stroke: '#111' });
  });
  for (i = 0; i <= 10; i++) {
    x = x0 + i * (x1 - x0) / 10;
    el('text', { x: x, y: y0 + 12, 'text-anchor': 'middle' }, String(1985 + 2 * i));
  }
  el('text', { x: 0, y: 0, class: 'ylab', transform: 'translate(18 60) rotate(-90)', 'text-anchor': 'middle' }, 'Abfluss [m³/s]');
})();
```
